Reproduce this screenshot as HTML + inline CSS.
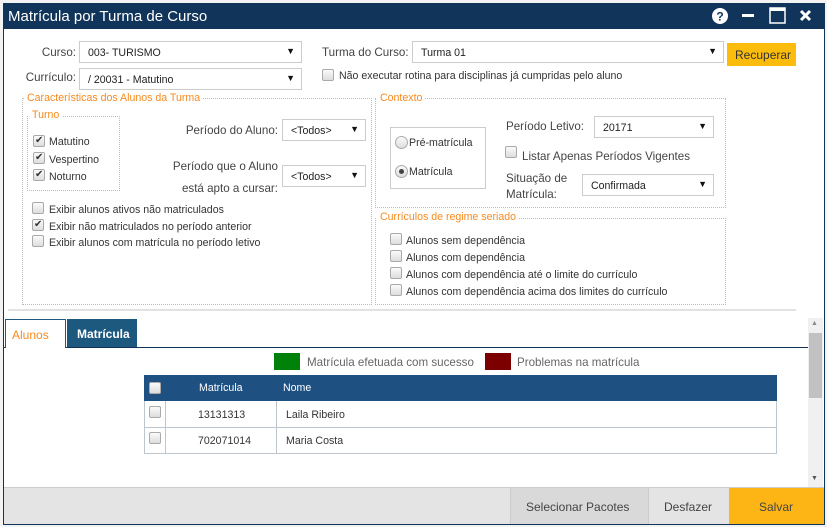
<!DOCTYPE html>
<html><head><meta charset="utf-8"><style>
*{box-sizing:border-box;margin:0;padding:0}
body{width:827px;height:527px;background:#f3f3f3;font-family:"Liberation Sans",sans-serif;font-size:10.6px;color:#333;position:relative;overflow:hidden}
.a{position:absolute;white-space:nowrap}
#win{position:absolute;left:3px;top:3px;width:822px;height:522px;border:1px solid #11355a;background:#fff}
.title{left:3px;top:3px;width:822px;height:26px;background:#11355a;color:#fff;font-size:15px;padding:5px 0 0 5px}
.sel{position:absolute;border:1px solid #ccc;background:#fff;height:22px;padding:5px 0 0 8px;font-size:10.6px;color:#222}
.sel:after{content:"▼";position:absolute;right:6px;top:4px;font-size:9px;color:#111}
.fs{position:absolute;border:1px dotted #bbb}
.lg{position:absolute;background:#fff;color:#f68a1f;font-size:10.6px;padding:0 3px}
.cb{position:absolute;width:12px;height:12px;border:1px solid #aaa;border-radius:2px;background:linear-gradient(#fafafa,#ddd)}
.cb.on:after{content:"✔";position:absolute;left:1px;top:-1px;font-size:10px;color:#333}
.rd{position:absolute;width:13px;height:13px;border:1px solid #aaa;border-radius:50%;background:linear-gradient(#fafafa,#ddd)}
.lbl{font-size:11.6px;color:#444}
</style></head><body>
<div id="win"></div>
<div class="a title">Matrícula por Turma de Curso</div>
<svg class="a" style="left:710px;top:6px" width="110" height="20">
<circle cx="10" cy="10" r="8" fill="#fff"/><text x="10" y="14.5" font-size="12" font-weight="bold" text-anchor="middle" fill="#11355a" font-family="Liberation Sans">?</text>
<rect x="32" y="8" width="12" height="3" fill="#fff"/>
<rect x="60" y="2" width="15" height="15" fill="none" stroke="#fff" stroke-width="1.5"/><rect x="60" y="2" width="15" height="3" fill="#fff"/>
<path d="M91 5 L100 14 M100 5 L91 14" stroke="#fff" stroke-width="3"/>
</svg>

<div class="a lbl" style="right:751px;top:46px">Curso:</div>
<div class="sel" style="left:79px;top:41px;width:223px">003- TURISMO</div>
<div class="a lbl" style="right:751px;top:71px">Currículo:</div>
<div class="sel" style="left:79px;top:68px;width:223px">/ 20031 - Matutino</div>
<div class="a lbl" style="left:322px;top:46px">Turma do Curso:</div>
<div class="sel" style="left:412px;top:41px;width:312px">Turma 01</div>
<div class="a" style="left:727px;top:43px;width:69px;height:23px;background:#fbbc0c;font-size:12px;padding:5px 0 0 8px;color:#333">Recuperar</div>
<div class="cb" style="left:322px;top:69px"></div>
<div class="a" style="left:339px;top:70px">Não executar rotina para disciplinas já cumpridas pelo aluno</div>

<div class="fs" style="left:22px;top:98px;width:350px;height:207px"></div>
<div class="lg" style="left:24px;top:92px">Características dos Alunos da Turma</div>
<div class="fs" style="left:27px;top:116px;width:93px;height:75px"></div>
<div class="lg" style="left:29px;top:109px">Turno</div>
<div class="cb on" style="left:33px;top:135px"></div><div class="a" style="left:49px;top:136px">Matutino</div>
<div class="cb on" style="left:33px;top:152px"></div><div class="a" style="left:49px;top:154px">Vespertino</div>
<div class="cb on" style="left:33px;top:169px"></div><div class="a" style="left:49px;top:171px">Noturno</div>
<div class="a lbl" style="right:549px;top:124px">Período do Aluno:</div>
<div class="sel" style="left:282px;top:119px;width:84px">&lt;Todos&gt;</div>
<div class="a lbl" style="right:549px;top:160px">Período que o Aluno</div>
<div class="a lbl" style="right:549px;top:182px">está apto a cursar:</div>
<div class="sel" style="left:282px;top:165px;width:84px">&lt;Todos&gt;</div>
<div class="cb" style="left:32px;top:202px"></div><div class="a" style="left:49px;top:204px">Exibir alunos ativos não matriculados</div>
<div class="cb on" style="left:32px;top:219px"></div><div class="a" style="left:49px;top:221px">Exibir não matriculados no período anterior</div>
<div class="cb" style="left:32px;top:235px"></div><div class="a" style="left:49px;top:237px">Exibir alunos com matrícula no período letivo</div>

<div class="fs" style="left:375px;top:98px;width:351px;height:110px"></div>
<div class="lg" style="left:377px;top:92px">Contexto</div>
<div class="a" style="left:390px;top:127px;width:96px;height:62px;border:1px solid #ccc"></div>
<div class="rd" style="left:395px;top:136px"></div><div class="a" style="left:409px;top:137px">Pré-matrícula</div>
<div class="rd" style="left:395px;top:165px"></div><div class="a" style="left:399px;top:169px;width:5px;height:5px;border-radius:50%;background:#444"></div><div class="a" style="left:409px;top:166px">Matrícula</div>
<div class="a lbl" style="left:506px;top:120px">Período Letivo:</div>
<div class="sel" style="left:594px;top:116px;width:120px">20171</div>
<div class="cb" style="left:505px;top:146px"></div><div class="a lbl" style="left:522px;top:150px">Listar Apenas Períodos Vigentes</div>
<div class="a lbl" style="left:506px;top:172px">Situação de</div>
<div class="a lbl" style="left:506px;top:188px">Matrícula:</div>
<div class="sel" style="left:582px;top:174px;width:132px">Confirmada</div>

<div class="fs" style="left:375px;top:218px;width:351px;height:87px"></div>
<div class="lg" style="left:377px;top:211px">Currículos de regime seriado</div>
<div class="cb" style="left:390px;top:233px"></div><div class="a" style="left:406px;top:235px">Alunos sem dependência</div>
<div class="cb" style="left:390px;top:250px"></div><div class="a" style="left:406px;top:252px">Alunos com dependência</div>
<div class="cb" style="left:390px;top:267px"></div><div class="a" style="left:406px;top:269px">Alunos com dependência até o limite do currículo</div>
<div class="cb" style="left:390px;top:284px"></div><div class="a" style="left:406px;top:286px">Alunos com dependência acima dos limites do currículo</div>

<div class="a" style="left:8px;top:309px;width:788px;height:2px;background:#e2e2e2"></div>

<div class="a" style="left:4px;top:347px;width:804px;height:1px;background:#11355a"></div>
<div class="a" style="left:5px;top:319px;width:61px;height:29px;border:1px solid #1e5a80;border-bottom:none;background:#fff;color:#f68a1f;font-size:12px;padding:8px 0 0 6px">Alunos</div>
<div class="a" style="left:67px;top:319px;width:70px;height:28px;background:#1d587f;color:#fff;font-size:12px;font-weight:bold;padding:8px 0 0 10px">Matrícula</div>

<div class="a" style="left:808px;top:318px;width:15px;height:169px;background:#f0f0f0"></div>
<div class="a" style="left:809px;top:333px;width:13px;height:65px;background:#c1c1c1"></div>
<div class="a" style="left:811px;top:320px;font-size:7px;color:#888">▲</div>
<div class="a" style="left:811px;top:475px;font-size:7px;color:#555">▼</div>

<div class="a" style="left:274px;top:353px;width:26px;height:17px;background:#00820a"></div>
<div class="a lbl" style="left:307px;top:356px;color:#666">Matrícula efetuada com sucesso</div>
<div class="a" style="left:485px;top:353px;width:26px;height:17px;background:#7d0000"></div>
<div class="a lbl" style="left:517px;top:356px;color:#666">Problemas na matrícula</div>

<div class="a" style="left:144px;top:375px;width:633px;height:79px;border:1px solid #bcc6cc;background:#fff"></div>
<div class="a" style="left:144px;top:375px;width:633px;height:26px;background:#1e5082"></div>
<div class="cb" style="left:149px;top:382px"></div>
<div class="a" style="left:199px;top:382px;color:#fff">Matrícula</div>
<div class="a" style="left:283px;top:382px;color:#fff">Nome</div>
<div class="a" style="left:144px;top:427px;width:633px;height:1px;background:#bcc6cc"></div>
<div class="a" style="left:165px;top:401px;width:1px;height:53px;background:#bcc6cc"></div>
<div class="a" style="left:276px;top:401px;width:1px;height:53px;background:#bcc6cc"></div>
<div class="cb" style="left:149px;top:406px"></div>
<div class="a" style="left:198px;top:409px">13131313</div><div class="a" style="left:286px;top:409px">Laila Ribeiro</div>
<div class="cb" style="left:149px;top:432px"></div>
<div class="a" style="left:198px;top:435px">702071014</div><div class="a" style="left:286px;top:435px">Maria Costa</div>

<div class="a" style="left:4px;top:487px;width:820px;height:37px;background:#e4e4e4;border-top:1px solid #ccc"></div>
<div class="a" style="left:510px;top:488px;width:138px;height:36px;background:#d9d9d9;border-left:1px solid #ccc;font-size:12px;color:#444;padding:12px 0 0 15px">Selecionar Pacotes</div>
<div class="a" style="left:648px;top:488px;width:81px;height:36px;background:#e4e4e4;border-left:1px solid #ccc;font-size:12px;color:#444;padding:12px 0 0 15px">Desfazer</div>
<div class="a" style="left:729px;top:488px;width:95px;height:36px;background:#fdb515;font-size:12px;color:#444;padding:12px 0 0 30px">Salvar</div>
</body></html>
